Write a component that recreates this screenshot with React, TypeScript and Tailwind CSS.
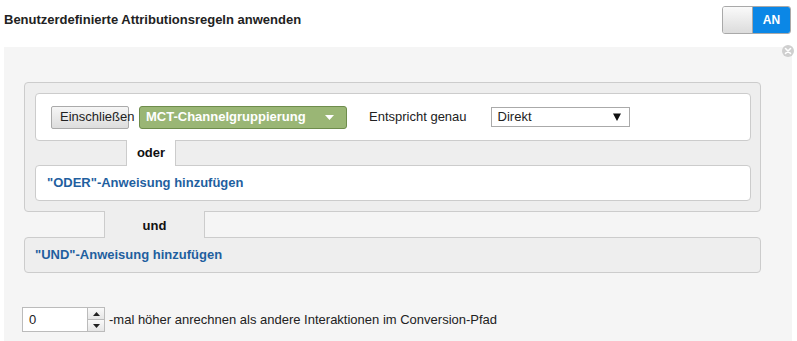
import React from "react";

export default function App() {
  const font = { fontFamily: '"Liberation Sans", Arial, sans-serif' };
  return (
    <div className="w-[797px] bg-white text-[13px] text-[#222]" style={font}>
      {/* Header */}
      <div className="flex items-center justify-between pl-[4px] pr-[6px] pt-[6px]">
        <div className="font-bold text-[13px] text-[#222]">Benutzerdefinierte Attributionsregeln anwenden</div>
        <div className="flex h-[28px] w-[69px] overflow-hidden rounded-[3px] border border-[#a9a9a9]">
          <div className="w-[30px] border-r border-[#a9a9a9] bg-gradient-to-b from-[#fafafa] to-[#dcdcdc]" />
          <div className="flex flex-1 items-center justify-center bg-[#0b87e6] text-[12px] font-bold text-white">AN</div>
        </div>
      </div>

      {/* Panel */}
      <div className="relative ml-[4px] mt-[13px] w-[788px] bg-[#f5f5f5] px-[20px] pb-[20px] pt-[35px]">
        <div className="absolute right-[-2px] top-[-2px] flex h-[12px] w-[12px] items-center justify-center rounded-full bg-[#cfcfcf]">
          <svg width="8" height="8" viewBox="0 0 8 8">
            <path d="M1.5 1.5 L6.5 6.5 M6.5 1.5 L1.5 6.5" stroke="white" strokeWidth="1.6" strokeLinecap="round" />
          </svg>
        </div>

        {/* OR group */}
        <div className="w-[737px] rounded-[4px] border border-[#cccccc] bg-[#eeeeee] pb-[10px] pl-[10px] pr-[9px] pt-[10px]">
          <div className="flex h-[48px] items-center rounded-[4px] border border-[#cccccc] bg-white pl-[15px]">
            <div className="flex h-[23px] w-[78px] items-center whitespace-nowrap rounded-[2px] border border-[#aaaaaa] bg-gradient-to-b from-[#f6f6f6] to-[#dddddd] pl-[8px] text-[13px] text-[#222]">
              Einschließen
            </div>
            <div className="ml-[10px] flex h-[23px] w-[208px] items-center justify-between rounded-[3px] border border-[#6e8c4c] bg-[#9ab675] pl-[6px] pr-[12px] text-[13px] font-bold text-white">
              <span>MCT-Channelgruppierung</span>
              <svg width="9" height="5" viewBox="0 0 9 5">
                <path d="M0 0 L9 0 L4.5 5 Z" fill="white" />
              </svg>
            </div>
            <div className="ml-[22px] text-[13px] text-[#222]">Entspricht genau</div>
            <div className="ml-[24px] flex h-[20px] w-[139px] items-center justify-between border border-[#aaaaaa] bg-white pl-[6px] pr-[8px] text-[13px] text-[#222]">
              <span>Direkt</span>
              <svg width="8" height="8" viewBox="0 0 8 8">
                <path d="M0 0.5 L8 0.5 L4 8 Z" fill="#111" />
              </svg>
            </div>
          </div>
          <div className="flex h-[24px]">
            <div className="w-[91px]" />
            <div className="relative z-10 -my-px flex w-[50px] items-center justify-center border-x border-[#cccccc] bg-white text-[13px] font-bold text-[#111]">
              oder
            </div>
          </div>
          <div className="flex h-[36px] items-center rounded-[4px] border border-[#cccccc] bg-white pl-[11px] text-[13px] font-bold text-[#1f5f9f]">
            "ODER"-Anweisung hinzufügen
          </div>
        </div>

        <div className="flex h-[25px]">
          <div className="w-[80px]" />
          <div className="relative z-10 -my-px flex w-[101px] items-center justify-center border-x border-[#cccccc] bg-[#eeeeee] pt-[2px] text-[13px] font-bold text-[#111]">
            und
          </div>
        </div>

        <div className="flex h-[36px] w-[737px] items-center rounded-[4px] border border-[#cccccc] bg-[#eeeeee] pl-[10px] text-[13px] font-bold text-[#1f5f9f]">
          "UND"-Anweisung hinzufügen
        </div>

        {/* Bottom row */}
        <div className="ml-[-2px] mt-[34px] flex items-center">
          <div className="flex h-[25px] w-[66px] items-center border border-[#bbbbbb] bg-white pl-[6px] text-[13px] text-[#222]">0</div>
          <div className="flex h-[25px] w-[17px] flex-col">
            <div className="flex flex-1 items-center justify-center border border-l-0 border-[#bbbbbb] bg-gradient-to-b from-[#fafafa] to-[#e6e6e6]">
              <svg width="7" height="4" viewBox="0 0 7 4"><path d="M0 4 L7 4 L3.5 0 Z" fill="#222" /></svg>
            </div>
            <div className="flex flex-1 items-center justify-center border border-l-0 border-t-0 border-[#bbbbbb] bg-gradient-to-b from-[#fafafa] to-[#e6e6e6]">
              <svg width="7" height="4" viewBox="0 0 7 4"><path d="M0 0 L7 0 L3.5 4 Z" fill="#222" /></svg>
            </div>
          </div>
          <div className="ml-[4px] text-[13px] text-[#222]">-mal höher anrechnen als andere Interaktionen im Conversion-Pfad</div>
        </div>
      </div>
    </div>
  );
}
